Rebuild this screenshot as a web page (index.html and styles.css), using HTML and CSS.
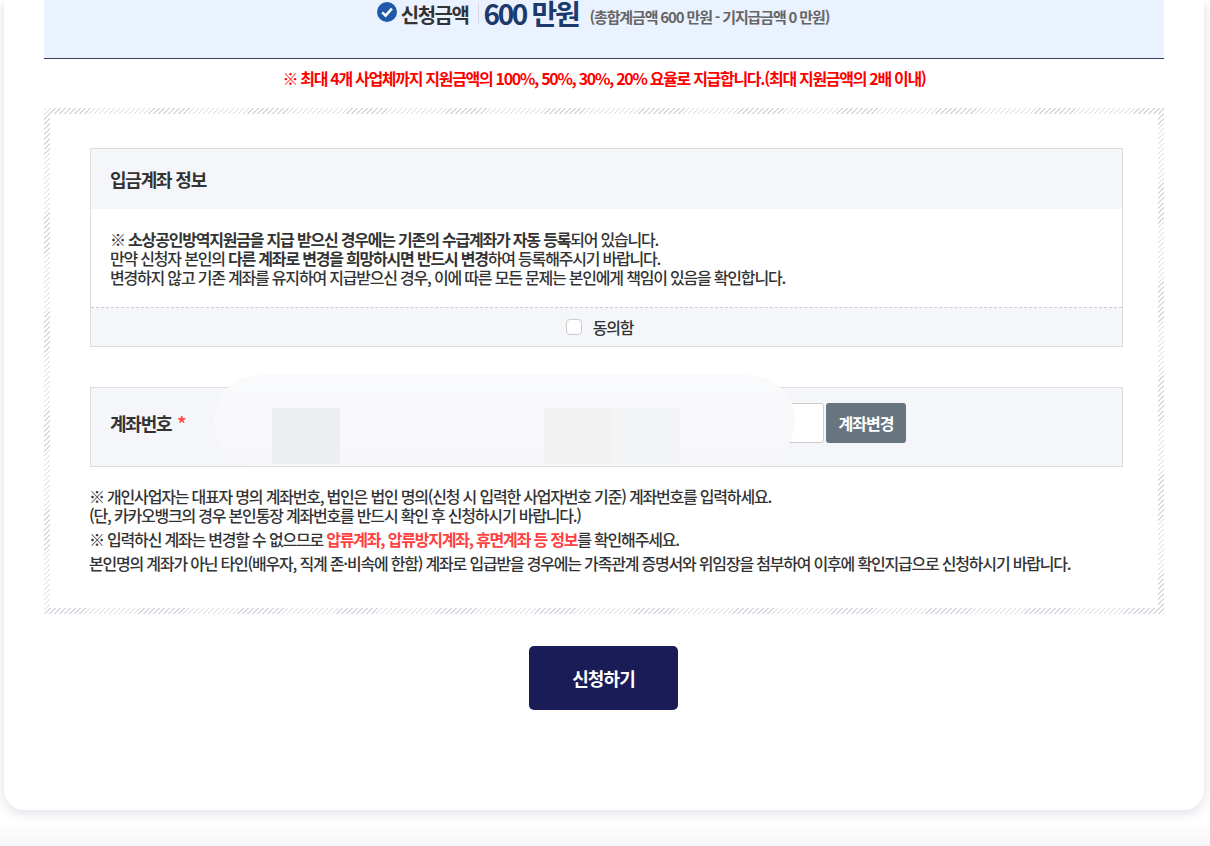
FILE: index.html
```html
<!DOCTYPE html>
<html lang="ko">
<head>
<meta charset="utf-8">
<title>신청하기</title>
<link rel="stylesheet" href="styles.css">
</head>
<body>
<main class="card">
  <section class="amount">
    <svg class="amount-icon" viewBox="0 0 20 20" aria-hidden="true">
      <circle cx="10" cy="10" r="10" fill="#1f5aa8"/>
      <path d="M5.2 10.4l3.4 3.3 6.3-7" fill="none" stroke="#fff" stroke-width="2.6"/>
    </svg>
    <strong class="amount-label">신청금액</strong>
    <span class="amount-divider"></span>
    <strong class="amount-value">600 만원</strong>
    <span class="amount-detail">(총합계금액 600 만원 - 기지급금액 0 만원)</span>
  </section>
  <p class="notice">※ 최대 4개 사업체까지 지원금액의 100%, 50%, 30%, 20% 요율로 지급합니다.(최대 지원금액의 2배 이내)</p>
  <section class="hatch">
    <div class="hatch-inner">
      <div class="info">
        <h2 class="info-title">입금계좌 정보</h2>
        <div class="info-body">
          <p>※ <b>소상공인방역지원금을 지급 받으신 경우에는 기존의 수급계좌가 자동 등록</b>되어 있습니다.</p>
          <p>만약 신청자 본인의 <b>다른 계좌로 변경을 희망하시면 반드시 변경</b>하여 등록해주시기 바랍니다.</p>
          <p>변경하지 않고 기존 계좌를 유지하여 지급받으신 경우, 이에 따른 모든 문제는 본인에게 책임이 있음을 확인합니다.</p>
        </div>
        <label class="agree"><span class="agree-box"></span><span>동의함</span></label>
      </div>
      <div class="account">
        <div class="account-label">계좌번호 <span class="req">*</span></div>
        <div class="account-input"></div>
        <button class="account-btn" type="button">계좌변경</button>
        <div class="redact">
          <span class="redact-a"></span>
          <span class="redact-b"></span>
          <span class="redact-c"></span>
        </div>
      </div>
      <div class="notes">
        <p>※ 개인사업자는 대표자 명의 계좌번호, 법인은 법인 명의(신청 시 입력한 사업자번호 기준) 계좌번호를 입력하세요.</p>
        <p class="tight">(단, 카카오뱅크의 경우 본인통장 계좌번호를 반드시 확인 후 신청하시기 바랍니다.)</p>
        <p>※ 입력하신 계좌는 변경할 수 없으므로 <b class="warn">압류계좌, 압류방지계좌, 휴면계좌 등 정보</b>를 확인해주세요.</p>
        <p>본인명의 계좌가 아닌 타인(배우자, 직계 존·비속에 한함) 계좌로 입급받을 경우에는 가족관계 증명서와 위임장을 첨부하여 이후에 확인지급으로 신청하시기 바랍니다.</p>
      </div>
    </div>
  </section>
  <div class="actions"><button class="submit" type="button">신청하기</button></div>
</main>
</body>
</html>
```
FILE: styles.css
```css
* { box-sizing: border-box; }
html, body { margin: 0; height: 846px; overflow: hidden; }
body {
  background: linear-gradient(to bottom, #fff 822px, #f6f6f9 846px);
  font-family: "Noto Sans CJK KR", "Noto Sans", sans-serif;
  font-weight: 500;
  color: #333;
  font-size: 16px;
  letter-spacing: -1.2px;
}
p, h2 { margin: 0; }
.card {
  height: 810px;
  margin: 0 6px 0 4px;
  padding: 0 40px;
  background: #fff;
  border-radius: 0 0 20px 20px;
  box-shadow: 0 3px 12px rgba(70, 70, 130, .18);
}
.amount {
  height: 59px;
  padding-right: 2px;
  display: flex;
  align-items: flex-start;
  justify-content: center;
  background: #ebf2ff;
  border-bottom: 1px solid #3d3f60;
}
.amount-icon { width: 20px; height: 20px; margin-top: 2px; margin-right: 4px; }
.amount-label { font-size: 20px; line-height: 30px; letter-spacing: -1.5px; color: #333; }
.amount-divider { width: 1px; height: 20px; margin: 3px 4px 0 10px; background: #d5d8e0; }
.amount-value { font-size: 28px; line-height: 26px; letter-spacing: -2.3px; color: #1c3a6b; }
.amount-detail { font-size: 15px; font-weight: 700; line-height: 34px; letter-spacing: -1.15px; color: #666; margin-left: 11px; }
.notice {
  height: 49px;
  line-height: 38px;
  text-align: center;
  font-weight: 700;
  letter-spacing: -1.3px;
  color: #f00;
}
.hatch {
  height: 506px;
  padding: 6px;
  background: repeating-linear-gradient(-45deg, #d6d9df 0 1px, #fff 1px 3.5px);
}
.hatch-inner {
  height: 100%;
  padding: 34px 35px 0 40px;
  background: #fff;
}
.info { height: 199px; border: 1px solid #ddd; }
.info-title {
  height: 60px;
  padding-left: 19px;
  line-height: 60px;
  font-size: 18px;
  font-weight: 700;
  background: #f5f6fa;
}
.info-body {
  height: 99px;
  padding: 21px 20px 0 19px;
  line-height: 19px;
  border-bottom: 1px dashed #ccc;
}
.agree {
  height: 38px;
  padding-right: 14px;
  display: flex;
  align-items: center;
  justify-content: center;
  gap: 11px;
  background: #f5f6fa;
}
.agree-box { width: 16px; height: 16px; background: #fff; border: 1px solid #ccc; border-radius: 4px; }
.account {
  position: relative;
  height: 80px;
  margin-top: 40px;
  padding-top: 15px;
  display: flex;
  align-items: flex-start;
  background: #f5f6fa;
  border: 1px solid #ddd;
}
.account-label { width: 150px; padding-left: 19px; font-size: 18px; font-weight: 700; line-height: 40px; }
.req { margin-left: 2px; color: #ff4d4d; }
.account-input { width: 583px; height: 40px; background: #fff; border: 1px solid #ccc; border-radius: 3px; }
.account-btn {
  width: 80px;
  height: 40px;
  margin-left: 2px;
  padding: 0;
  border: 0;
  border-radius: 3px;
  background: #67757f;
  color: #fff;
  font: 700 16px "Noto Sans CJK KR", sans-serif;
  letter-spacing: -1px;
}
.redact {
  position: absolute;
  left: 123px;
  top: -13px;
  width: 581px;
  height: 91px;
  border-radius: 46px;
  background: linear-gradient(#f9fafb, #f7f7f9);
}
.redact span { position: absolute; top: 33px; height: 56px; width: 68px; }
.redact-a { left: 58px; background: #edeef0; }
.redact-b { left: 330px; background: #f2f2f3; }
.redact-c { left: 398px; background: #f3f4f5; }
.notes { margin-top: 20px; margin-left: -1px; }
.notes p { line-height: 19px; margin-top: 5px; }
.notes p:first-child, .notes .tight { margin-top: 0; }
.warn { color: #ff4040; }
.actions { display: flex; justify-content: center; margin-top: 32px; padding-right: 1px; }
.submit {
  width: 149px;
  height: 64px;
  border: 0;
  border-radius: 5px;
  background: #1a1c57;
  color: #fff;
  font: 700 18px "Noto Sans CJK KR", sans-serif;
  letter-spacing: -0.9px;
}
```
